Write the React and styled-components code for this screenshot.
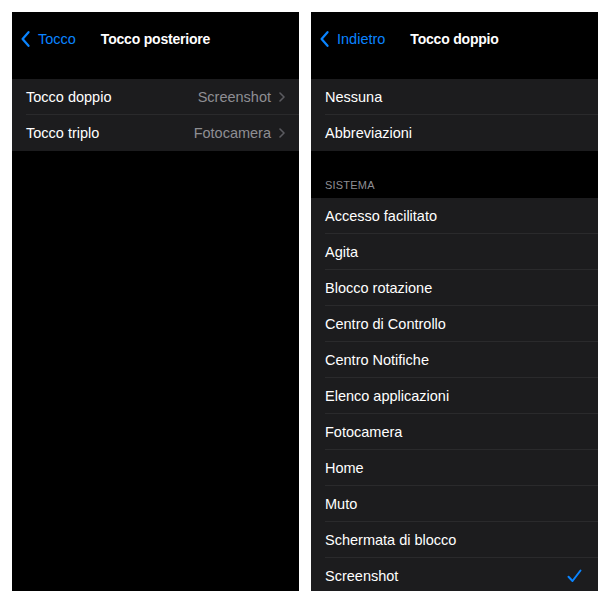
import styled, { createGlobalStyle } from "styled-components";

const GlobalStyle = createGlobalStyle`
  html, body {
    margin: 0;
    padding: 0;
    background: #ffffff;
    font-family: "Liberation Sans", Arial, sans-serif;
  }
`;

const leftRows = [
  { label: "Tocco doppio", value: "Screenshot" },
  { label: "Tocco triplo", value: "Fotocamera" },
];

const topOptions = ["Nessuna", "Abbreviazioni"];

const systemOptions = [
  "Accesso facilitato",
  "Agita",
  "Blocco rotazione",
  "Centro di Controllo",
  "Centro Notifiche",
  "Elenco applicazioni",
  "Fotocamera",
  "Home",
  "Muto",
  "Schermata di blocco",
  "Screenshot",
];

function BackChevron() {
  return (
    <BackIcon viewBox="0 0 9 16">
      <path d="M7.5 1.2 L1.6 8 L7.5 14.8" />
    </BackIcon>
  );
}

function NavBar({ back, title }) {
  return (
    <Nav>
      <BackButton>
        <BackChevron />
        <span>{back}</span>
      </BackButton>
      <Title>{title}</Title>
      <span />
    </Nav>
  );
}

function App() {
  return (
    <>
      <GlobalStyle />
      <Page>
        <Panel>
          <NavBar back="Tocco" title="Tocco posteriore" />
          <Group>
            {leftRows.map((r, i) => (
              <Row key={r.label} last={i === leftRows.length - 1}>
                <Label>{r.label}</Label>
                <Value>{r.value}</Value>
                <Disclosure viewBox="0 0 6 10">
                  <path d="M1 1 L5 5 L1 9" />
                </Disclosure>
              </Row>
            ))}
          </Group>
        </Panel>

        <Panel>
          <NavBar back="Indietro" title="Tocco doppio" />
          <Group>
            {topOptions.map((o, i) => (
              <Row key={o} last={i === topOptions.length - 1}>
                <Label>{o}</Label>
              </Row>
            ))}
          </Group>
          <SectionHeader>SISTEMA</SectionHeader>
          <Group>
            {systemOptions.map((o, i) => (
              <Row key={o} last={i === systemOptions.length - 1}>
                <Label>{o}</Label>
                {o === "Screenshot" && (
                  <Check viewBox="0 0 15 14">
                    <path d="M1.5 7.8 L5.5 12 L13.5 1.5" />
                  </Check>
                )}
              </Row>
            ))}
          </Group>
        </Panel>
      </Page>
    </>
  );
}

export default App;

const Page = styled.div`
  display: grid;
  grid-template-columns: 287px 287px;
  column-gap: 12px;
  padding: 12px;
  width: 610px;
  height: 603px;
  box-sizing: border-box;
  background: #ffffff;
`;

const Panel = styled.div`
  background: #000000;
  height: 579px;
  overflow: hidden;
  display: flex;
  flex-direction: column;
`;

const Nav = styled.div`
  display: grid;
  grid-template-columns: 1fr auto 1fr;
  align-items: center;
  flex-shrink: 0;
  height: 54px;
  margin-bottom: 13px;
`;

const BackButton = styled.div`
  display: flex;
  align-items: center;
  gap: 8px;
  padding-left: 9px;
  color: #0a84ff;
  font-size: 14.5px;
`;

const BackIcon = styled.svg`
  width: 9px;
  height: 16px;
  fill: none;
  stroke: #0a84ff;
  stroke-width: 2.2;
  stroke-linecap: round;
  stroke-linejoin: round;
`;

const Title = styled.div`
  color: #ffffff;
  font-size: 14px;
  font-weight: 700;
  letter-spacing: -0.2px;
`;

const Group = styled.div`
  background: #1c1c1e;
  flex-shrink: 0;
`;

const Row = styled.div`
  display: flex;
  align-items: center;
  height: 36px;
  margin-left: 14px;
  padding-right: 14px;
  box-sizing: border-box;
  border-bottom: ${(p) => (p.last ? "none" : "1px solid #2a2a2c")};
`;

const Label = styled.span`
  flex: 1;
  color: #ffffff;
  font-size: 14.5px;
`;

const Value = styled.span`
  color: #8e8e93;
  font-size: 14.5px;
  margin-right: 8px;
`;

const Disclosure = styled.svg`
  width: 6px;
  height: 10px;
  fill: none;
  stroke: #5b5b60;
  stroke-width: 1.6;
  stroke-linecap: round;
  stroke-linejoin: round;
`;

const SectionHeader = styled.div`
  height: 47px;
  flex-shrink: 0;
  display: flex;
  align-items: flex-end;
  padding: 0 0 7px 14px;
  box-sizing: border-box;
  color: #8e8e93;
  font-size: 11px;
  letter-spacing: 0.2px;
`;

const Check = styled.svg`
  width: 15px;
  height: 14px;
  margin-right: 2px;
  fill: none;
  stroke: #0a84ff;
  stroke-width: 2;
  stroke-linecap: round;
  stroke-linejoin: round;
`;
